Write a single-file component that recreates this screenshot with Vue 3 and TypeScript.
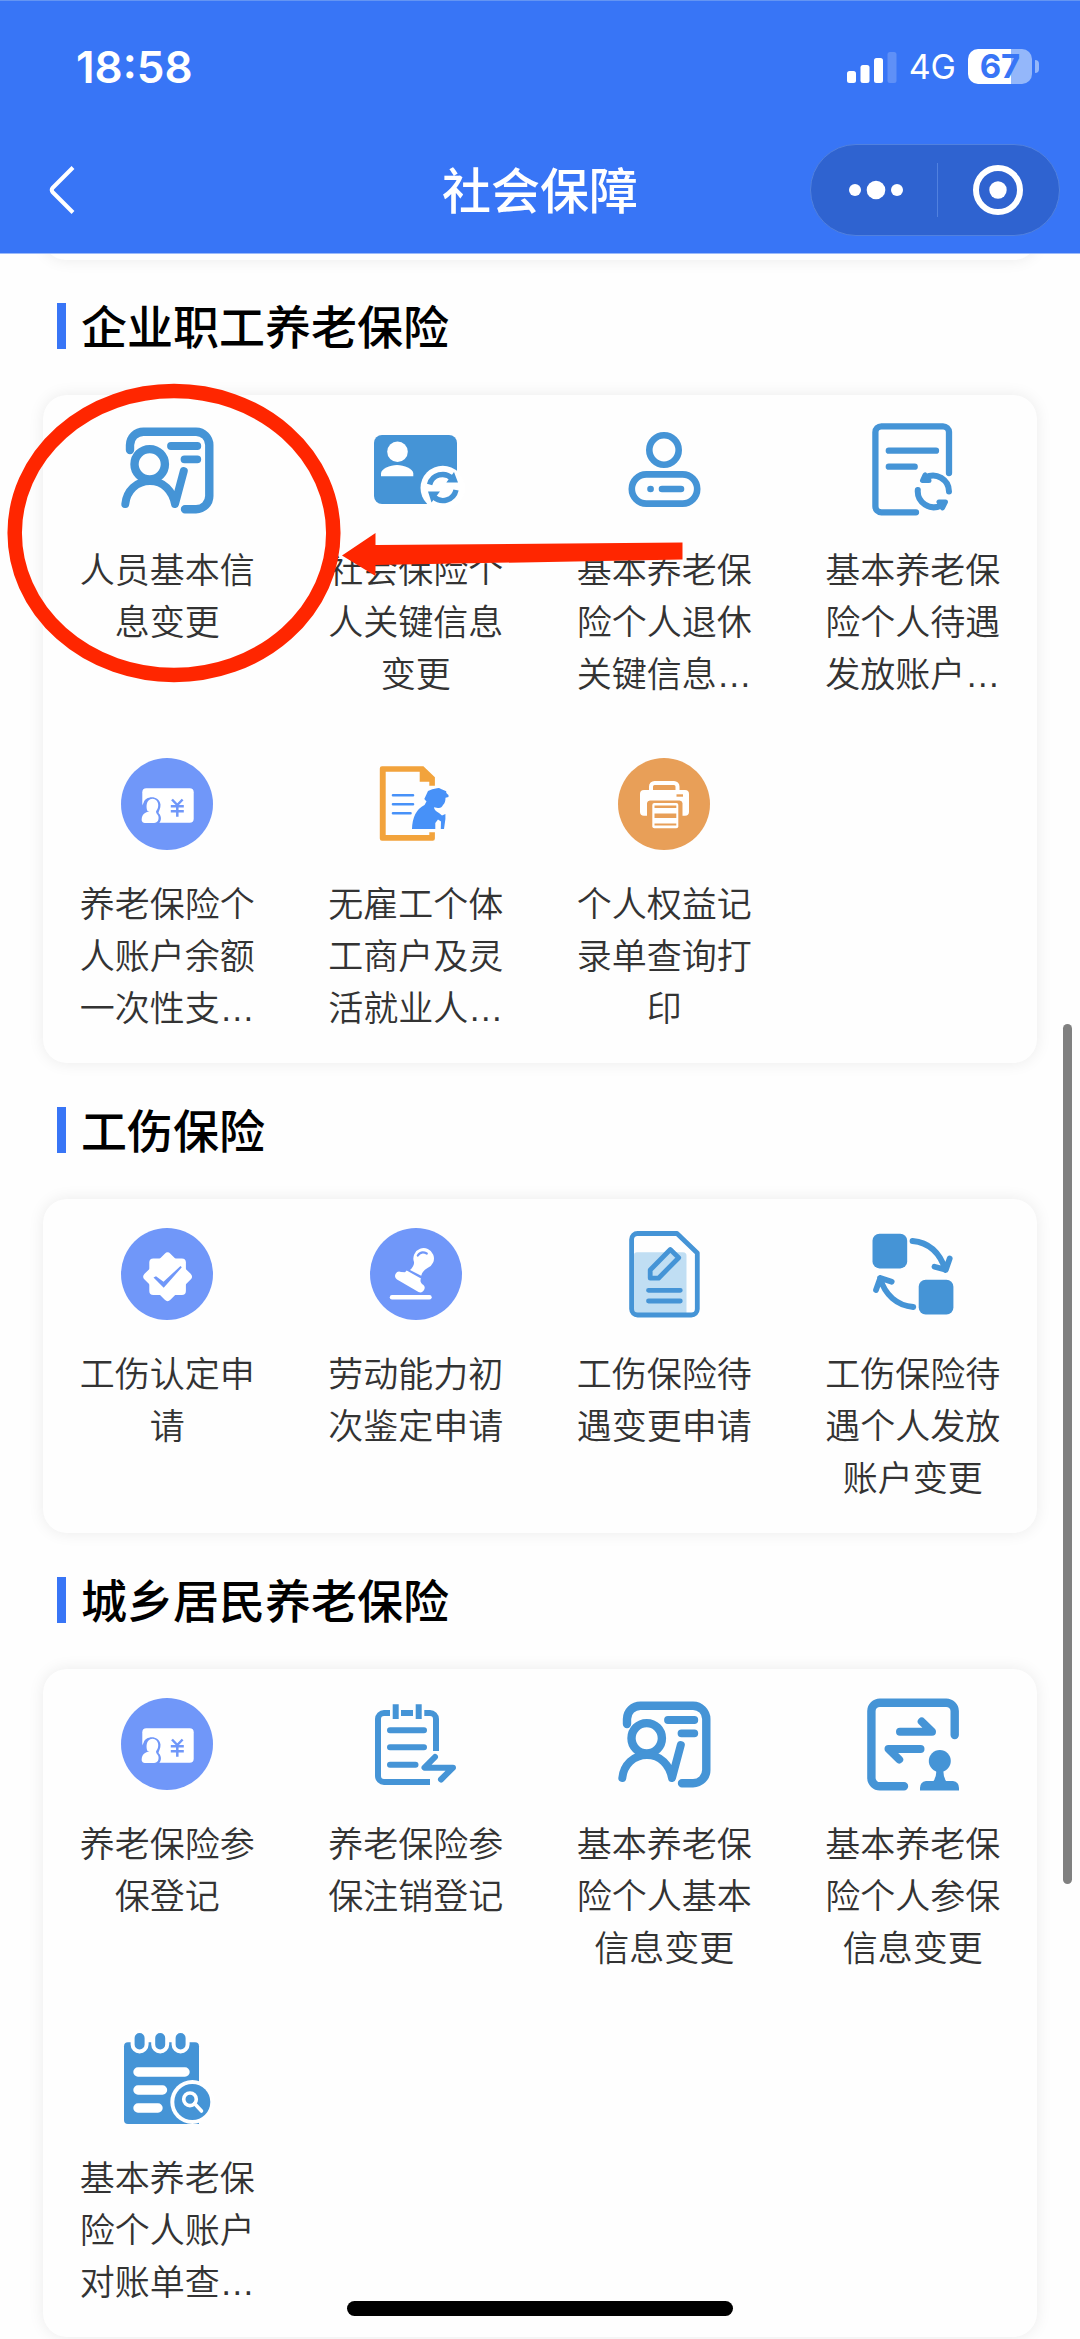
<script setup lang="ts">
interface Service {
  icon: string
  label: string
}

interface Section {
  title: string
  services: Service[]
}

const line = 'fill="none" stroke="#4594d6" stroke-linecap="round" stroke-linejoin="round"'

const icons: Record<string, string> = {
  person: `
    <g ${line} stroke-width="8.4">
      <path d="M9 26V21A13.500 13.500 0 0 1 22.500 7.700H75A13.300 13.300 0 0 1 88.300 21V72A13.300 13.300 0 0 1 75 85.300H64"/>
      <path d="M50 22H76.300M63.500 35.300H76.300" stroke-width="7.800"/>
      <circle cx="28.700" cy="40.300" r="15.200"/>
      <path d="M4.300 80C5.500 67 15.500 57 29 57S51.500 67 54 80L62.800 47" stroke-width="8"/>
    </g>`,
  cardRefresh: `
    <rect x="4" y="11" width="83" height="69" rx="8" fill="#4594d6"/>
    <circle cx="27.500" cy="27.700" r="10.300" fill="#fff"/>
    <path d="M11 52.300V49.500C11 45 20 41 27 41S43.300 45 43.300 49.500V52.300Z" fill="#fff"/>
    <circle cx="72.800" cy="64" r="22.300" fill="#fff"/>
    <path d="M59.600 60.500A13.300 13.300 0 0 1 82 54.500M86 66A13.300 13.300 0 0 1 64 73" fill="none" stroke="#4594d6" stroke-width="5.400"/>
    <path d="M84 48L88 58.500H76.300ZM58 67.500H70L61.500 78.500Z" fill="#4594d6"/>`,
  pensioner: `
    <g ${line} stroke-width="6.600">
      <circle cx="46" cy="26" r="14.700"/>
      <rect x="13.800" y="50.400" width="65.400" height="29.200" rx="14.600"/>
      <path d="M32.500 65H32.600M44 65H63"/>
    </g>`,
  docRefresh: `
    <g ${line} stroke-width="6.300">
      <path d="M82 49V8A6 6 0 0 0 76 2.300H14.400A6 6 0 0 0 8.400 8.300V82.300A6 6 0 0 0 14.400 88.300H49"/>
      <path d="M21.800 26.700H69M21.800 42.700H47.700"/>
      <path d="M82 67.500A16 16 0 0 0 58.500 53.500M50.800 66A16 16 0 0 0 74 81.500" stroke-width="6"/>
      <path d="M58 51L55.500 56.500H62ZM72 78H78.500L75.500 84Z" stroke-width="5"/>
    </g>`,
  pension: `
    <circle cx="46" cy="46" r="46" fill="#7097f9"/>
    <rect x="21.300" y="30.300" width="51.400" height="34.500" rx="4" fill="#fff"/>
    <path d="M20 49L22.500 45C24 37.500 38 36.500 39.500 46.500C39.800 50.500 37.500 53 37.500 55C41 58.500 40.500 63 37.500 66H20Z" fill="#7097f9"/>
    <path d="M26.500 53C25 50 24.500 41 31.500 40.700C38 41 38.500 49 35.500 52.500C34 54.500 36.500 56 37.300 58C38.200 61 37 65 33 65H25C21.500 65 20.500 63.500 20.700 61C21 56.500 24 54 28.500 53.500Z" fill="#fff"/>
    <path d="M51 41.500L56.300 47L61.600 41.500M56.300 46V58.700M49.800 48.300H62.800M49.800 53.300H62.800" fill="none" stroke="#7097f9" stroke-width="2.500"/>`,
  worker: `
    <path fill-rule="evenodd" d="M12 8.300H53.400L64.900 19.300V27.700H59.300V23.700H49.700V13.700H15.700V77H59.300V74.300H64.900V80.500Q64.900 82.700 62.700 82.700H12Q9.800 82.700 9.800 80.500V10.500Q9.800 8.300 12 8.300Z" fill="#f2a33c"/>
    <path d="M23 37.300H43M23 46.300H43M23 55.300H40.500" stroke="#4791f8" stroke-width="2.600" stroke-linecap="round"/>
    <path d="M58 33Q62 31 67 30.300Q69 29.500 71 31L76.300 33.300Q75.500 35 78.500 37V39L75.500 39.700Q75.500 45 73 47Q71.500 50.500 68 50L63.900 49.300Q64.500 53 69 55L72 57.500L75.400 56V61L74 71H70.800L71 63.500L68 61.500L65.300 65V71H42Q42.500 53 54.500 47L56.500 43.500L54.300 41Z" fill="#4791f8"/>`,
  printer: `
    <circle cx="46" cy="46" r="46" fill="#e89f58"/>
    <path d="M33 34V28.500A3.500 3.500 0 0 1 36.500 25H56A3.500 3.500 0 0 1 59.500 28.500V34" fill="none" stroke="#fff" stroke-width="4"/>
    <path d="M26 32H67A4 4 0 0 1 71 36V54Q71 57.700 67 57.700H64.500V45A3 3 0 0 0 61.500 42.500H32A3 3 0 0 0 29 45V57.700H26Q22 57.700 22 54V36A4 4 0 0 1 26 32Z" fill="#fff"/>
    <path d="M58.500 36.300H65V38.700H58.500Z" fill="#e89f58"/>
    <rect x="34.300" y="45" width="26" height="25.300" rx="2" fill="#fff"/>
    <path d="M36.500 47.500H58.300V50H36.500ZM36.500 55.500H58.300V60H36.500ZM36.500 65.500H58.300V67.500H36.500Z" fill="#e89f58"/>`,
  badge: `
    <circle cx="46" cy="46" r="46" fill="#7097f9"/>
    <rect x="28.300" y="30.400" width="36.600" height="36.600" rx="4" fill="#fff"/>
    <rect x="28.300" y="30.400" width="36.600" height="36.600" rx="4" fill="#fff" transform="rotate(45 46.600 48.700)"/>
    <path d="M32.500 49.500L35 48.300L42.500 53.800L59.500 38L60.800 39.300L42.700 59.700Z" fill="#7097f9"/>`,
  stamp: `
    <circle cx="46" cy="46" r="46" fill="#7097f9"/>
    <path d="M44 34A10.300 10.300 0 1 1 57.500 40Q53 42 51.200 47.800L40 42Q44.500 38 44 34Z" fill="#fff"/>
    <path d="M47.800 27.500Q51 22.500 56.800 25.500" fill="none" stroke="#7097f9" stroke-width="2.200" stroke-linecap="round"/>
    <path d="M25.500 46Q27.500 42.500 31 44L35 44.200L36.700 42.500L51 50.500Q49.500 53 52 56Q55.500 58 54.500 61Q52.500 65.500 48.500 64L27 51.500Q24 49 25.500 46Z" fill="#fff"/>
    <path d="M22 69.300H59.500" stroke="#fff" stroke-width="4.400" stroke-linecap="round"/>`,
  docEdit: `
    <path d="M16 27Q16 24.300 19 24.300H65Q68.500 24.300 68.500 28V85H16Z" fill="#c0def3"/>
    <g ${line} stroke-width="4.800">
      <path d="M19.600 5.500H59L79.300 25V81A6 6 0 0 1 73.300 87H19.600A6 6 0 0 1 13.600 81V11.500A6 6 0 0 1 19.600 5.500Z"/>
      <path d="M30.500 62.300H62.300M30.500 73H62.300M52.300 21.500L60.700 29.700L40.500 50.200H32.200V42Z"/>
    </g>`,
  swap: `
    <rect x="5.500" y="5.700" width="34.700" height="34.700" rx="7" fill="#4594d6"/>
    <rect x="51.700" y="51.800" width="34.700" height="34.700" rx="7" fill="#4594d6"/>
    <path d="M45.500 13C62 14.500 73 25 78.500 42M67.500 38.700L78.800 41.700L82.700 30.500M46.300 79C30 77.500 18 67 13 50M24.700 53.700L13.300 50L9 62" ${line} stroke-width="5.800"/>`,
  clipboard: `
    <g fill="none" stroke="#4594d6" stroke-width="6">
      <path d="M60 84H14A6 6 0 0 1 8 78V21A6 6 0 0 1 14 15H20M31 15H43M54.300 15H60A6 6 0 0 1 66 21V53M25.700 6.300V21M48.700 6.300V21"/>
      <path d="M20 32.300H54M20 49.300H54M20 66.700H45.500M65 59L54.500 69.700H83L71 81.500" stroke-linecap="round" stroke-linejoin="round"/>
    </g>`,
  transfer: `
    <path d="M87.700 37V13A8.500 8.500 0 0 0 79 4.700H13A8.500 8.500 0 0 0 4.400 13V80A8.500 8.500 0 0 0 13 88.300H37" ${line} stroke-width="8.400"/>
    <path d="M33 33.700H65L54.700 23.500M53.500 51H21.500L32.200 61.500" ${line} stroke-width="8"/>
    <circle cx="72.800" cy="63" r="11" fill="#4594d6"/>
    <path d="M69 72H76.500Q76 78 79 83H86Q92 84 92 90V92.500H53V90Q53 84 59 83H66.500Q70 78 69 72Z" fill="#4594d6"/>`,
  notebook: `
    <path d="M7 10.300H74Q78 10.300 78 14.300V92H7Q3 92 3 88V14.300Q3 10.300 7 10.300Z" fill="#4594d6"/>
    <g fill="#4594d6" stroke="#fff" stroke-width="4">
      <rect x="11.600" y="-1" width="14" height="20.500" rx="7"/>
      <rect x="32.200" y="-1" width="14" height="20.500" rx="7"/>
      <rect x="52.600" y="-1" width="14" height="20.500" rx="7"/>
    </g>
    <path d="M17 40H64M17 58H41.500M17 76H37" stroke="#fff" stroke-width="9.400" stroke-linecap="round"/>
    <circle cx="71.300" cy="70" r="22" fill="#fff"/>
    <circle cx="71.300" cy="70" r="18" fill="#4594d6"/>
    <circle cx="69" cy="67.300" r="6.300" fill="none" stroke="#fff" stroke-width="3.600"/>
    <path d="M73.500 71.500L80.500 79" stroke="#fff" stroke-width="3.600" stroke-linecap="round"/>`,
}

const sections: Section[] = [
  {
    title: '企业职工养老保险',
    services: [
      { icon: 'person', label: '人员基本信息变更' },
      { icon: 'cardRefresh', label: '社会保险个人关键信息变更' },
      { icon: 'pensioner', label: '基本养老保险个人退休关键信息…' },
      { icon: 'docRefresh', label: '基本养老保险个人待遇发放账户…' },
      { icon: 'pension', label: '养老保险个人账户余额一次性支…' },
      { icon: 'worker', label: '无雇工个体工商户及灵活就业人…' },
      { icon: 'printer', label: '个人权益记录单查询打印' },
    ],
  },
  {
    title: '工伤保险',
    services: [
      { icon: 'badge', label: '工伤认定申请' },
      { icon: 'stamp', label: '劳动能力初次鉴定申请' },
      { icon: 'docEdit', label: '工伤保险待遇变更申请' },
      { icon: 'swap', label: '工伤保险待遇个人发放账户变更' },
    ],
  },
  {
    title: '城乡居民养老保险',
    services: [
      { icon: 'pension', label: '养老保险参保登记' },
      { icon: 'clipboard', label: '养老保险参保注销登记' },
      { icon: 'person', label: '基本养老保险个人基本信息变更' },
      { icon: 'transfer', label: '基本养老保险个人参保信息变更' },
      { icon: 'notebook', label: '基本养老保险个人账户对账单查…' },
    ],
  },
]
</script>

<template>
  <div class="page">
    <header class="header">
      <div class="status">
        <time class="clock">18:58</time>
        <div class="indicators">
          <svg class="signal" width="50" height="32" viewBox="0 0 50 32" fill="#fff" aria-hidden="true">
            <rect x="0" y="20" width="9" height="12" rx="2.500" />
            <rect x="13.500" y="14" width="9" height="18" rx="2.500" />
            <rect x="27" y="7" width="9" height="25" rx="2.500" />
            <rect x="40.500" y="1" width="9" height="31" rx="2.500" opacity="0.200" />
          </svg>
          <span class="network">4G</span>
          <span class="battery"><span class="level">67</span><i class="nub"></i></span>
        </div>
      </div>
      <nav class="nav">
        <button class="back" type="button" aria-label="返回">
          <svg width="28" height="52" viewBox="0 0 28 52" fill="none" stroke="#fff" stroke-width="4" stroke-linejoin="round" aria-hidden="true">
            <path d="M25 3.500L4.500 24Q3 26 4.500 28L25 48.500" />
          </svg>
        </button>
        <h1 class="title">社会保障</h1>
        <div class="capsule">
          <button class="capsule-button more" type="button" aria-label="更多">
            <svg width="56" height="52" viewBox="0 0 56 52" fill="#fff" aria-hidden="true">
              <circle cx="7" cy="26" r="6" />
              <circle cx="28" cy="26" r="9.300" />
              <circle cx="49" cy="26" r="6" />
            </svg>
          </button>
          <span class="divider"></span>
          <button class="capsule-button" type="button" aria-label="关闭">
            <svg width="52" height="52" viewBox="0 0 52 52" aria-hidden="true">
              <circle cx="26" cy="26" r="22" fill="none" stroke="#fff" stroke-width="6" />
              <circle cx="26" cy="26" r="8.700" fill="#fff" />
            </svg>
          </button>
        </div>
      </nav>
    </header>

    <main class="content">
      <div class="card card-tail"></div>
      <section v-for="section in sections" :key="section.title">
        <h2 class="heading">{{ section.title }}</h2>
        <div class="card grid">
          <a v-for="service in section.services" :key="service.label" class="service" href="#">
            <svg class="icon" viewBox="0 0 92 92" aria-hidden="true" v-html="icons[service.icon]"></svg>
            <span class="label">{{ service.label }}</span>
          </a>
        </div>
      </section>
    </main>

    <svg class="annotation" width="700" height="320" viewBox="0 0 700 320" aria-hidden="true">
      <ellipse cx="174" cy="157" rx="159.300" ry="142" fill="none" stroke="#ff2600" stroke-width="14.500" />
      <path d="M342 179.500L375.500 157V169L682.500 166.500V183.500L375.500 189V200Z" fill="#ff2600" />
    </svg>
    <div class="scrollbar"></div>
    <div class="home-indicator"></div>
  </div>
</template>

<style>
body {
  margin: 0;
  background: #fefefe;
}
</style>

<style scoped>
.page {
  position: relative;
  min-height: 100vh;
  overflow: hidden;
  background: #fefefe;
  font-family: "Liberation Sans", "Noto Sans CJK SC", sans-serif;
}

.header {
  position: relative;
  z-index: 1;
  padding-bottom: 5px;
  border-top: 1px solid #6495f3;
  border-bottom: 1px solid #9bbafa;
  background: #3875f6;
  color: #fff;
}

.status {
  display: flex;
  align-items: center;
  justify-content: space-between;
  height: 131px;
  padding: 0 48px 0 76px;
  font-family: Inter, sans-serif;
}

.clock {
  font-size: 44px;
  font-weight: 600;
}

.indicators {
  display: flex;
  align-items: center;
}

.network {
  margin: 0 12px;
  font-size: 34px;
}

.battery {
  position: relative;
  width: 64px;
  height: 35px;
  border-radius: 10px;
  background: linear-gradient(90deg, #fff 67%, #94b7fa 67%);
  color: #3875f6;
  font-size: 33px;
  font-weight: 700;
  line-height: 35px;
  text-align: center;
}

.nub {
  position: absolute;
  top: 11px;
  right: -7px;
  width: 4px;
  height: 13px;
  border-radius: 0 6px 6px 0;
  background: #94b7fa;
}

.nav {
  display: grid;
  grid-template-columns: 1fr auto 1fr;
  align-items: center;
  height: 116px;
  padding: 0 20px;
}

button {
  display: flex;
  align-items: center;
  justify-content: center;
  padding: 0;
  border: 0;
  background: none;
}

.back {
  justify-self: start;
  padding-left: 28px;
}

.title {
  margin: 0;
  padding-top: 4px;
  font-size: 49px;
  font-weight: 500;
  line-height: 50px;
}

.capsule {
  display: flex;
  align-items: center;
  justify-self: end;
  box-sizing: border-box;
  width: 250px;
  height: 92px;
  border: 1px solid #5181df;
  border-radius: 46px;
  background: #2f63d0;
}

.capsule-button {
  flex: 1 1 0;
  height: 100%;
}

.more {
  box-sizing: border-box;
  padding-left: 4px;
}

.divider {
  width: 1px;
  height: 54px;
  background: #5181df;
}

.content {
  padding: 0 43px;
}

.card {
  border-radius: 24px;
  background: #fefefe;
  box-shadow: 0 0 16px rgba(0, 0, 0, 0.08);
}

.card-tail {
  height: 46px;
  margin-top: -40px;
}

.heading {
  display: flex;
  align-items: flex-start;
  gap: 15px;
  height: 46px;
  margin: 0;
  padding: 43px 0 46px 14px;
  color: #000;
  font-size: 46px;
  font-weight: 500;
  line-height: 50px;
}

.heading::before {
  width: 9px;
  height: 46px;
  background: #3875f6;
  content: "";
}

.grid {
  display: grid;
  grid-template-columns: repeat(4, 1fr);
}

.service {
  display: flex;
  flex-direction: column;
  align-items: center;
  gap: 29px;
  min-height: 277px;
  padding: 29px 0 28px;
  color: #333;
  text-decoration: none;
}

.grid + .heading,
section + section .heading {
  padding-top: 44px;
}

.icon {
  width: 92px;
  height: 92px;
  overflow: visible;
}

.label {
  width: 176px;
  font-size: 35px;
  font-weight: 350;
  line-height: 52px;
  text-align: center;
}

.annotation {
  position: absolute;
  top: 376px;
  left: 0;
}

.scrollbar {
  position: absolute;
  top: 1024px;
  right: 8px;
  width: 9px;
  height: 860px;
  border-radius: 5px;
  background: #808080;
}

.home-indicator {
  position: absolute;
  bottom: 23px;
  left: 50%;
  width: 386px;
  height: 15px;
  margin-left: -193px;
  border-radius: 8px;
  background: #000;
}
</style>
